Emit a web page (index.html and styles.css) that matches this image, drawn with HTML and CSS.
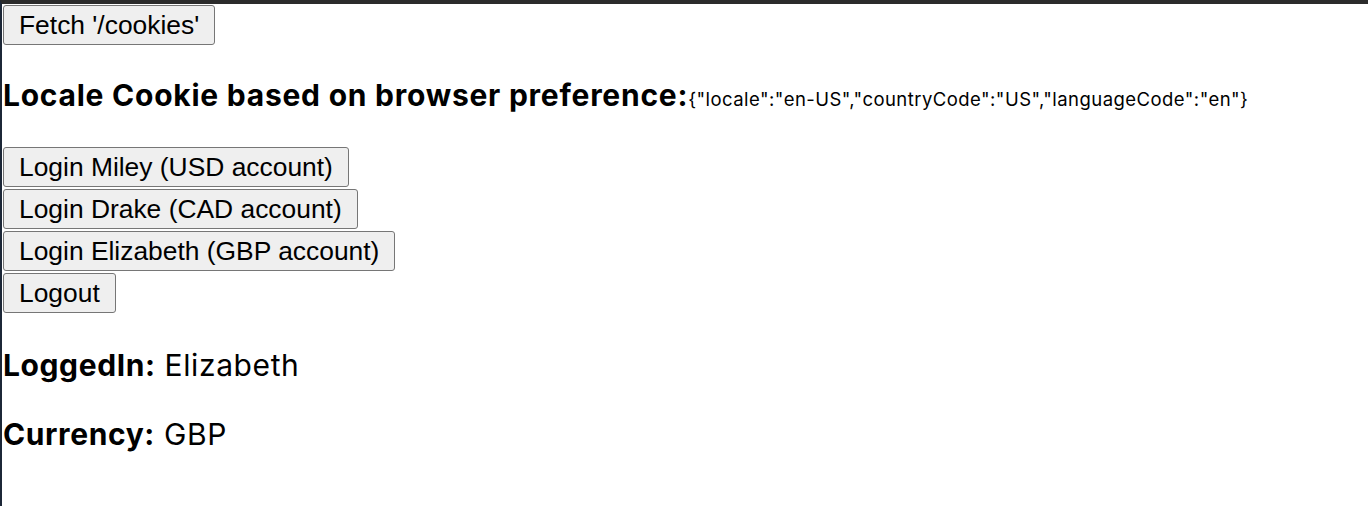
FILE: index.html
```html
<!DOCTYPE html>
<html>
<head>
<meta charset="utf-8">
<link rel="stylesheet" href="styles.css">
</head>
<body>
<div class="page">
  <button class="btn">Fetch '/cookies'</button>
  <h3 class="locale">Locale Cookie based on browser preference:<span class="json">{"locale":"en-US","countryCode":"US","languageCode":"en"}</span></h3>
  <div class="logins">
    <div><button class="btn">Login Miley (USD account)</button></div>
    <div><button class="btn">Login Drake (CAD account)</button></div>
    <div><button class="btn">Login Elizabeth (GBP account)</button></div>
    <div><button class="btn">Logout</button></div>
  </div>
  <p class="info"><b>LoggedIn:</b> Elizabeth</p>
  <p class="info"><b>Currency:</b> GBP</p>
</div>
</body>
</html>
```
FILE: styles.css
```css
html, body {
  margin: 0;
  padding: 0;
  background: #fff;
}
body {
  font-family: Inter, "Noto Sans", sans-serif;
  color: #000;
}
.page {
  box-sizing: border-box;
  height: 506px;
  border-top: 4px solid #2b2b2b;
  border-left: 2px solid #1c2737;
  padding: 1px 0 0 1px;
}
.btn {
  font: 26.4px "Liberation Sans", Arial, sans-serif;
  height: 40px;
  padding: 0 15px;
  border: 1px solid #767676;
  border-radius: 3px;
  background: #efefef;
  color: #000;
  margin: 0;
  display: block;
}
.locale {
  font-size: 30px;
  font-weight: 700;
  letter-spacing: 0.75px;
  line-height: 36px;
  margin: 32px 0 0;
}
.json {
  font-size: 18.5px;
  font-weight: 400;
  letter-spacing: 0.45px;
  line-height: 0;
}
.logins {
  display: flex;
  flex-direction: column;
  gap: 2px;
  margin-top: 34px;
}
.info {
  font-size: 30px;
  letter-spacing: 0.6px;
  line-height: 36px;
  margin: 34px 0 0;
}
.info + .info {
  margin-top: 33px;
}
```
